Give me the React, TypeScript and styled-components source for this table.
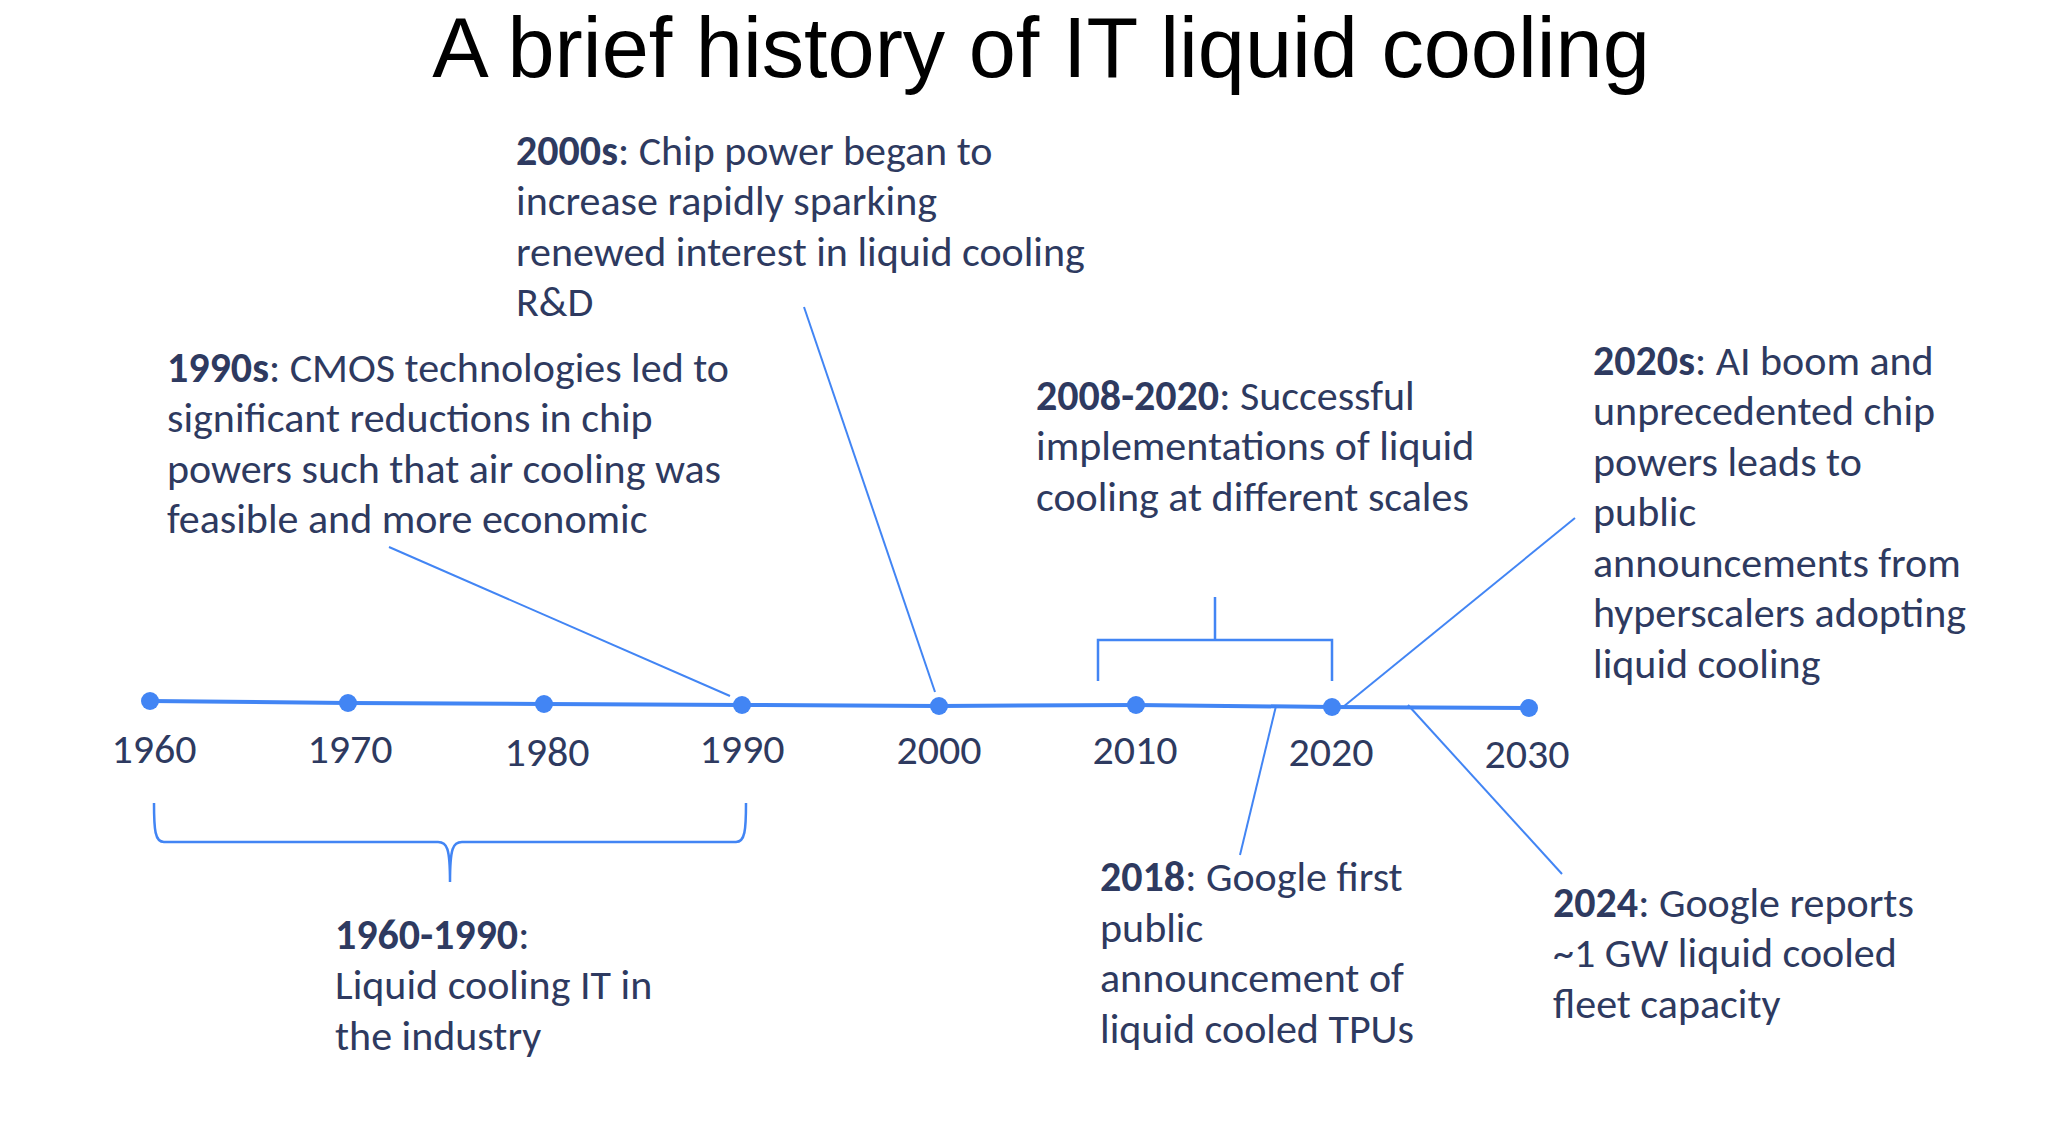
import React from "react";
import styled, { createGlobalStyle } from "styled-components";

const INK = "#2e3a60";
const BLUE = "#4285f4";
const NOTE_FS = 42;
const NOTE_LH = 50.6;
const NOTE_BASE = 37.5;
const YEAR_FS = 42;
const YEAR_BASE = 34.5;

const Global = createGlobalStyle`
  html, body { margin: 0; padding: 0; background: #ffffff; }
  body { width: 2048px; height: 1144px; overflow: hidden; }
`;

const Page = styled.main`
  position: relative;
  width: 2048px;
  height: 1144px;
  background: #ffffff;
  font-family: "Carlito", "Lato", "Noto Sans", sans-serif;
  color: ${INK};
`;

const Title = styled.h1`
  margin: 0;
  padding: 6px 0 0 34px;
  font-family: "Liberation Sans", Arial, sans-serif;
  font-weight: 400;
  font-size: 84.7px;
  line-height: 84px;
  color: #000000;
  text-align: center;
  white-space: nowrap;
`;

const Diagram = styled.svg`
  position: absolute;
  left: 0;
  top: 0;
  width: 2048px;
  height: 1144px;
  pointer-events: none;
`;

const Note = styled.div<{ $x: number; $baseline: number }>`
  position: absolute;
  left: ${(p) => p.$x}px;
  top: ${(p) => p.$baseline - NOTE_BASE}px;
  font-size: ${NOTE_FS}px;
  line-height: ${NOTE_LH}px;
  white-space: nowrap;
  color: ${INK};
`;

const NoteLine = styled.div`
  display: block;
`;

const Lead = styled.strong`
  font-weight: 700;
`;

const Year = styled.div<{ $cx: number; $baseline: number }>`
  position: absolute;
  left: ${(p) => p.$cx}px;
  top: ${(p) => p.$baseline - YEAR_BASE}px;
  transform: translateX(-50%);
  font-size: ${YEAR_FS}px;
  line-height: ${YEAR_FS}px;
  white-space: nowrap;
  color: ${INK};
`;

type NoteData = { x: number; baseline: number; lead: string; lines: string[] };

const notes: NoteData[] = [
  {
    x: 516,
    baseline: 163,
    lead: "2000s",
    lines: [": Chip power began to", "increase rapidly sparking", "renewed interest in liquid cooling", "R&D"],
  },
  {
    x: 167,
    baseline: 380,
    lead: "1990s",
    lines: [
      ": CMOS technologies led to",
      "significant reductions in chip",
      "powers such that air cooling was",
      "feasible and more economic",
    ],
  },
  {
    x: 1036,
    baseline: 408,
    lead: "2008-2020",
    lines: [": Successful", "implementations of liquid", "cooling at different scales"],
  },
  {
    x: 1593,
    baseline: 373,
    lead: "2020s",
    lines: [
      ": AI boom and",
      "unprecedented chip",
      "powers leads to",
      "public",
      "announcements from",
      "hyperscalers adopting",
      "liquid cooling",
    ],
  },
  {
    x: 1100,
    baseline: 889.5,
    lead: "2018",
    lines: [": Google first", "public", "announcement of", "liquid cooled TPUs"],
  },
  {
    x: 1553,
    baseline: 915,
    lead: "2024",
    lines: [": Google reports", "~1 GW liquid cooled", "fleet capacity"],
  },
  {
    x: 335,
    baseline: 947,
    lead: "1960-1990",
    lines: [":", "Liquid cooling IT in", "the industry"],
  },
];

const ticks = [
  { year: "1960", x: 150, y: 701, cx: 154, base: 762.5 },
  { year: "1970", x: 348, y: 703, cx: 350, base: 762.5 },
  { year: "1980", x: 544, y: 704, cx: 547, base: 765 },
  { year: "1990", x: 742, y: 705, cx: 742, base: 762.5 },
  { year: "2000", x: 939, y: 706, cx: 939, base: 763.5 },
  { year: "2010", x: 1136, y: 705, cx: 1135, base: 763.5 },
  { year: "2020", x: 1332, y: 707, cx: 1331, base: 765 },
  { year: "2030", x: 1529, y: 708, cx: 1527, base: 767 },
];

const connectors: [number, number, number, number][] = [
  [389, 547, 730, 696],
  [804, 307, 935, 692],
  [1575, 518, 1343, 707],
  [1276, 706, 1240, 855],
  [1408, 705, 1562, 874],
];

export default function App() {
  return (
    <>
      <Global />
      <Page>
        <Title>A brief history of IT liquid cooling</Title>
        <Diagram viewBox="0 0 2048 1144">
          <polyline
            points={ticks.map((t) => `${t.x},${t.y}`).join(" ")}
            fill="none"
            stroke={BLUE}
            strokeWidth={4}
            strokeLinejoin="round"
          />
          {ticks.map((t) => (
            <circle key={t.year} cx={t.x} cy={t.y} r={9} fill={BLUE} />
          ))}
          {connectors.map(([x1, y1, x2, y2], i) => (
            <line key={i} x1={x1} y1={y1} x2={x2} y2={y2} stroke={BLUE} strokeWidth={2} />
          ))}
          <path
            d="M1098 681 V640 H1332 V681 M1215 640 V597"
            fill="none"
            stroke={BLUE}
            strokeWidth={2.5}
          />
          <path
            d="M154 803 C154 830 155 842 164 842 H438 C447 842 450 848 450 882 C450 848 453 842 462 842 H736 C745 842 746 830 746 803"
            fill="none"
            stroke={BLUE}
            strokeWidth={2.5}
          />
        </Diagram>
        {ticks.map((t) => (
          <Year key={t.year} $cx={t.cx} $baseline={t.base}>
            {t.year}
          </Year>
        ))}
        {notes.map((n) => (
          <Note key={n.lead} $x={n.x} $baseline={n.baseline}>
            {n.lines.map((line, i) => (
              <NoteLine key={i}>
                {i === 0 ? <Lead>{n.lead}</Lead> : null}
                {line}
              </NoteLine>
            ))}
          </Note>
        ))}
      </Page>
    </>
  );
}
